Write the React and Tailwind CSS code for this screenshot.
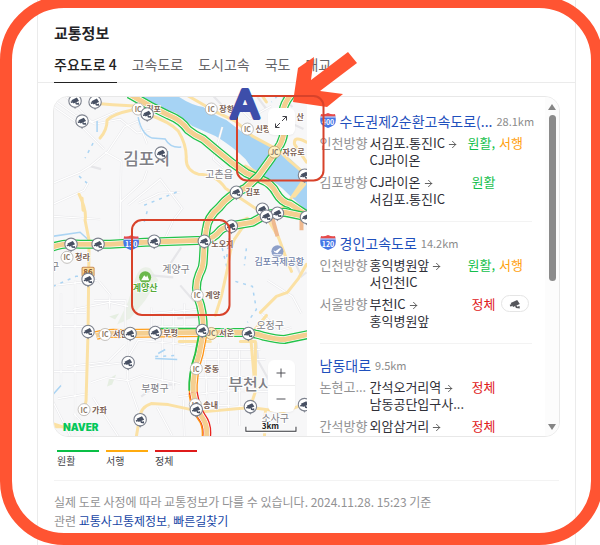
import React from "react";
import { ArrowRight, Plus, Minus } from "lucide-react";

const tabs = ["주요도로 4", "고속도로", "도시고속", "국도", "대교"];

const roads = [
  {
    name: "수도권제2순환고속도로(...",
    km: "28.1km",
    shield: "400",
    rows: [
      { dir: "인천방향", from: "서김포.통진IC", to: "CJ라이온", status: ["원활", "서행"] },
      { dir: "김포방향", from: "CJ라이온", to: "서김포.통진IC", status: ["원활"] },
    ],
  },
  {
    name: "경인고속도로",
    km: "14.2km",
    shield: "120",
    rows: [
      { dir: "인천방향", from: "홍익병원앞", to: "서인천IC", status: ["원활", "서행"] },
      { dir: "서울방향", from: "부천IC", to: "홍익병원앞", status: ["정체"], cctv: true },
    ],
  },
  {
    name: "남동대로",
    km: "9.5km",
    rows: [
      { dir: "논현고...", from: "간석오거리역", to: "남동공단입구사...", status: ["정체"] },
      { dir: "간석방향", from: "외암삼거리", status: ["정체"] },
    ],
  },
];

const statusColor = {
  원활: "text-[#14bf4c]",
  서행: "text-[#ff9f0f]",
  정체: "text-[#e0201b]",
};

const legend = [
  { label: "원활", bar: "bg-[#0abf46]" },
  { label: "서행", bar: "bg-[#ffab0f]" },
  { label: "정체", bar: "bg-[#df1b1b]" },
];

function CameraShape({ fill = "#475063" }) {
  return (
    <g fill={fill}>
      <path d="M-3.6 -0.8 L1.8 -3.4 L4 0 L-1.6 2.4 Z" />
      <path d="M-4.4 0.6 L-2.6 0 L-2 1.6 L-4 2 Z" />
      <path d="M0 1.6 L1.4 1 L1.8 2.2 L3.8 1.6 L4 3.8 L0.8 3.4 Z" />
    </g>
  );
}

function Camera({ x, y }) {
  return (
    <g transform={`translate(${x} ${y})`}>
      <path d="M-2 5.5 L0 8 L2 5.5 Z" fill="#8b909a" />
      <circle r="6.2" fill="#fff" stroke="#7d828e" strokeWidth="1.1" />
      <CameraShape />
    </g>
  );
}

function Junction({ x, y, label, kind = "IC" }) {
  return (
    <g>
      <circle cx={x} cy={y} r="6" fill={kind === "JC" ? "#fff0c2" : "#fff"} stroke={kind === "JC" ? "#b99b66" : "#b5b1ad"} strokeWidth="0.8" />
      <text x={x} y={y + 3} textAnchor="middle" fontSize="7" fontWeight="700" fill="#8b7866">{kind}</text>
      <text x={x + 8} y={y + 3} fontSize="8" fontWeight="700" fill="#7a6053" stroke="#fff" strokeWidth="1.5" paintOrder="stroke">{label}</text>
    </g>
  );
}

function Shield({ x = 0, y = 0, label }) {
  return (
    <g transform={`translate(${x} ${y})`}>
      <path d="M1 2 Q4 3 8 1 Q12 3 15 2 Q17 9 14 12 Q11 14 8 15 Q5 14 2 12 Q-1 9 1 2 Z" fill="#4677e6" />
      <path d="M1 1 Q4 2 8 0 Q12 2 15 1 L15.5 3.5 H0.5 Z" fill="#e64a4a" />
      <path d="M0.5 4 H15.5" stroke="#fff" strokeWidth="0.8" />
      <text x="8" y="11.5" textAnchor="middle" fontSize="7" fontWeight="700" fill="#fff">{label}</text>
    </g>
  );
}

const trunkA = "M129 94 L150 106 L168 115 Q181 120 188 130 Q194 135 203 139 L216 150 L232 163 L246 173 L260 179 Q271 183 276 193 Q281 202 290 204 L308 216";
const trunkB = "M291 94 Q281 106 282 118 Q286 132 280 144 L271 158 L258 176 L245 188 Q228 195 219 207 Q207 217 206 229 L204 242 L203 260 Q203 267 199 274 Q194 286 198 298 Q203 310 203 330";
const trunkC = "M52 247 Q64 242 80 244 L110 244 L145 242 L204 240 Q213 239 220 230 Q224 226 234 225 L252 222 L266 214 L284 212 L308 217";
const east = "M203 332 L245 332 Q256 333 264 336 Q276 339 284 339 L308 334";
const west = "M96 335 Q106 332 120 333 L203 332";
const south = "M203 332 L199 353 Q192 374 193 394";
const southJam = "M193 392 Q196 409 202 417 Q208 425 206 438";

function Trunk({ d, edge = "#23c34a", mid = "#f4cf91" }) {
  return (
    <g fill="none" strokeLinejoin="round">
      <path d={d} stroke={edge} strokeWidth="9" />
      <path d={d} stroke="#fff" strokeWidth="6.4" />
      <path d={d} stroke={mid} strokeWidth="5" />
    </g>
  );
}

const cameras = [
  [75, 101], [95, 102], [82, 121], [147, 114], [161, 153], [304, 175], [236, 192],
  [262, 209], [277, 213], [266, 216], [231, 226], [204, 241], [154, 241], [98, 244],
  [71, 244], [88, 279], [88, 331], [130, 333], [155, 332], [128, 362], [140, 419],
  [202, 330], [248, 333], [196, 409], [250, 406], [304, 404], [306, 217],
];

function TrafficMap() {
  return (
    <svg viewBox="54 97 252 339" preserveAspectRatio="xMinYMin slice" className="block h-full w-full" role="img" aria-label="교통지도">
      <rect x="53" y="96" width="255" height="343" fill="#f7f7f8" />
      <g fill="#e5eee1">
        <path d="M134 282 Q139 263 150 268 L158 280 Q151 290 145 300 L130 318 L117 324 L128 301 Z" opacity=".75" />
        <path d="M109 378 L116 374 L112 384 L107 386 Z" />
        <path d="M109 316 L119 313 L115 319 Z" />
      </g>
      <path d="M140 95 H176 Q190 105 203 107 Q213 115 226 120 L243 133 Q262 139 271 147 L290 159 L308 176 V212 L290 196 Q276 181 264 177 Q252 171 245 159 Q232 146 215 136 L192 126 L176 113 Q157 107 140 96 Z" fill="#a6d3f4" />

      <g fill="none" stroke="#e6e6e9" strokeWidth="2.2">
        <path d="M53 106 L80 125 L104 149 M54 100 L75 115 L95 124 L120 119 L137 133 L150 130 M65 96 L92 122 L117 111 M53 183 L80 172 L90 166 L108 151 L124 127 L138 121 L147 144" />
        <path d="M105 152 L121 161 L120 240 M90 166 L101 169 M53 204 L84 190 L88 183 M120 202 L143 181 L147 170 M128 205 L160 179 L182 208 L173 220 L164 240 M53 216 L100 219 M138 203 L159 193 L180 192" />
        <path d="M54 285 L97 280 M73 309 L109 302 L128 306 M75 280 V434 M61 293 V384 M66 312 H86 M54 326 H86 M99 281 L110 294 L109 309 M94 300 H125 V331 M54 371 H86 M58 398 L88 393 M67 366 L108 361 L125 344" />
        <path d="M90 366 L125 362 L138 340 L174 343 L206 347 M91 382 L106 377 L128 380 L142 375 L180 383 M128 341 L127 379 L138 410 M141 396 L157 384 L175 384 M151 307 V327 M162 313 V381 M173 308 V389 M184 303 V344 M151 313 L198 309 M151 326 H198" />
        <path d="M205 349 H260 M195 359 H265 M191 377 H245 M204 343 L207 403 M218 343 V423 M228 350 V434 M239 350 V425 M178 396 L228 390 L268 391 M205 404 L245 406 M157 407 L172 435 M183 399 L184 436 M74 413 L93 434 M53 401 L71 437 M93 397 L119 437" />
        <path d="M222 127 L213 159 L223 168 M238 107 L250 119 L260 112 L271 106 M213 96 L227 111 M257 97 L266 109 M282 97 L292 107 M288 122 L303 129 M267 280 L292 296 L301 313 M292 257 L301 276 L306 272 M177 318 L206 316 M261 313 L280 330 L291 327 M256 342 L258 361 L268 379 M180 285 L194 301 M151 275 L173 277 M169 265 L181 247" />
      </g>
      <g fill="none" stroke="#fff" strokeWidth="1.2">
        <path d="M53 106 L80 125 L104 149 M54 100 L75 115 L95 124 L120 119 L137 133 L150 130 M65 96 L92 122 L117 111 M53 183 L80 172 L90 166 L108 151 L124 127 L138 121 L147 144 M105 152 L121 161 L120 240 M53 204 L84 190 L88 183 M120 202 L143 181 L147 170 M128 205 L160 179 L182 208 L173 220 L164 240 M53 216 L100 219 M138 203 L159 193 L180 192" />
        <path d="M54 285 L97 280 M73 309 L109 302 L128 306 M75 280 V434 M61 293 V384 M66 312 H86 M54 326 H86 M99 281 L110 294 L109 309 M94 300 H125 V331 M54 371 H86 M58 398 L88 393 M67 366 L108 361 L125 344 M90 366 L125 362 L138 340 L174 343 L206 347 M91 382 L106 377 L128 380 L142 375 L180 383 M128 341 L127 379 L138 410 M151 307 V327 M162 313 V381 M173 308 V389 M184 303 V344 M151 313 L198 309 M151 326 H198" />
        <path d="M205 349 H260 M195 359 H265 M191 377 H245 M204 343 L207 403 M218 343 V423 M228 350 V434 M239 350 V425 M178 396 L228 390 L268 391 M205 404 L245 406 M157 407 L172 435 M183 399 L184 436 M74 413 L93 434 M53 401 L71 437 M93 397 L119 437 M222 127 L213 159 L223 168 M238 107 L250 119 L260 112 L271 106 M267 280 L292 296 L301 313 M261 313 L280 330 L291 327" />
      </g>

      <g fill="none" stroke="#abd4f3" strokeWidth="1.5">
        <path d="M97 121 V132 M138 117 Q141 134 152 138 L165 139 Q170 148 181 147 M53 236 L80 232 L91 242 M53 394 L61 385 M158 353 L165 349 M155 358 L177 359" />
        <path strokeDasharray="3 5" d="M93 143 L85 158 M79 176 L87 183 M144 205 L159 199 L181 190 M147 211 L144 222 M53 286 L76 276 L98 274 M220 240 L227 269 M246 248 L244 265 M235 281 L252 286 L256 309 L247 322 M230 230 L226 260 M155 356 L176 355 M277 96 L271 102" />
      </g>

      <g fill="none" stroke="#fbe1a4" strokeWidth="3" strokeLinecap="round" strokeLinejoin="round">
        <path d="M91 103 Q112 105 135 106 L132 110 Q113 114 107 120 Q107 130 100 138 M147 114 Q170 122 178 131 Q186 144 186 157 Q185 170 198 174 Q216 174 225 188 L246 202 L265 215 L278 237" />
        <path d="M188 96 L214 111 L235 121 L252 136 L278 150 Q288 160 300 170 M306 142 Q293 135 294 144 L306 162 M303 180 L288 202 L280 209" />
        <path d="M79 194 Q87 211 85 220 L89 240 L88 331 L86 400 L84 410 M82 198 L83 210 M53 426 H70 M53 423 L65 427 M140 419 Q139 407 151 403 L168 404 L191 409 L205 411 L250 407 L283 411 L306 403 M139 419 L136 437" />
        <path d="M243 226 L234 239 Q230 247 227 269 L221 296 L215 315 M247 218 Q236 222 230 232 M278 237 L285 256 L291 271 M294 196 L304 184 M306 264 L298 278 L287 292 L276 296 L260 312 M266 315 L252 332 M240 341 H255 V391 L250 406 M250 333 L255 391 M265 411 L264 437" />
        <path d="M179 341 L210 341 M262 96 L266 102 M245 166 L256 172" />
      </g>
      <path d="M272 218 L277 236 M301 218 V230" fill="none" stroke="#efb98f" strokeWidth="4" />

      <Trunk d={west} edge="#ffa01f" />
      <path d="M160 328 H203" fill="none" stroke="#23c34a" strokeWidth="1.4" />
      <Trunk d={south} edge="#ff9415" />
      <path d="M199 333 L195 353 Q188 374 189 390" fill="none" stroke="#23c34a" strokeWidth="1.8" />
      <Trunk d={southJam} edge="#e9231f" />
      <path d="M189 394 Q191 409 198 419 Q203 425 202 437" fill="none" stroke="#ff9415" strokeWidth="1.5" />
      <Trunk d={east} />
      <Trunk d={trunkA} />
      <Trunk d={trunkC} />
      <Trunk d={trunkB} />

      <g fill="#808086" stroke="#fff" strokeWidth="2" paintOrder="stroke">
        <text x="123" y="165" fontSize="17" fontWeight="500">김포시</text>
        <text x="205" y="178" fontSize="10">고촌읍</text>
        <text x="162" y="273" fontSize="10">계양구</text>
        <text x="50" y="270" fontSize="10">구</text>
        <text x="141" y="391" fontSize="10">부평구</text>
        <text x="256" y="329" fontSize="10">오정구</text>
        <text x="228" y="389" fontSize="16" fontWeight="500">부천시</text>
        <text x="261" y="421" fontSize="10">소사구</text>
      </g>

      <Junction x={138} y={109} label="김포" />
      <Junction x={211} y={109} label="장항" />
      <Junction x={247} y={129} label="신평" />
      <Junction x={274} y={152} label="자유로" kind="JC" />
      <Junction x={67} y={257} label="청라" />
      <Junction x={197} y={295} label="계양" />
      <Junction x={105} y={334} label="서인천" />
      <Junction x={211} y={333} label="서운" kind="JC" />
      <Junction x={196} y={368} label="중동" />
      <Junction x={195} y={404} label="송내" />
      <Junction x={84} y={409} label="가좌" />
      <g fontSize="8" fontWeight="700" fill="#7a6053" stroke="#fff" strokeWidth="1.5" paintOrder="stroke">
        <text x="245" y="195">김포</text>
        <text x="211" y="247">노오지</text>
        <text x="163" y="336">부평</text>
        <text x="296" y="120">산</text>
      </g>
      <rect x="82" y="267" width="12" height="9" rx="1" fill="#ffdf9a" stroke="#c88b54" />
      <text x="88" y="275" textAnchor="middle" fontSize="8" fontWeight="700" fill="#835435">86</text>
      <Shield x={123} y={235} label="130" />

      <circle cx="145" cy="277" r="6" fill="#6bb84c" />
      <path d="M141 280 L144 275 L146 277 L147 275 L149 280 Z" fill="#fff" />
      <text x="145" y="291" textAnchor="middle" fontSize="9" fontWeight="700" fill="#57aa3a" stroke="#fff" strokeWidth="1.5" paintOrder="stroke">계양산</text>
      <circle cx="277" cy="251" r="6" fill="#8d9fc8" />
      <path d="M273 250 L275 251 L279 248 L281 248 L277 253 L274 252 Z M273 254 H281 V255 H273 Z" fill="#fff" />
      <text x="254" y="265" fontSize="9" fontWeight="500" fill="#6f7fa9" stroke="#fff" strokeWidth="1.5" paintOrder="stroke">김포국제공항</text>

      {cameras.map(([x, y]) => <Camera key={`${x}-${y}`} x={x} y={y} />)}

      <text x="63" y="430" fontSize="10" fontWeight="900" fill="#03c75a" fontFamily="Inter, sans-serif">NAVER</text>
      <path d="M246 426 V431 H295 V426" fill="none" stroke="#fff" strokeWidth="3" />
      <path d="M245.500 426 V430.500 H295.500 V426" fill="none" stroke="#33343a" />
      <text x="270" y="428" textAnchor="middle" fontSize="8" fontWeight="600" fill="#222" stroke="#fff" strokeWidth="1.5" paintOrder="stroke">3km</text>
    </svg>
  );
}

function Road({ road }) {
  return (
    <li className="border-b border-[#f3f3f3] pt-[10px] pb-[14px]">
      <h3 className="flex h-[22px] items-center whitespace-nowrap">
        {road.shield && (
          <svg viewBox="0 0 16 16" className="mr-1 h-4 w-4 shrink-0" aria-hidden="true">
            <Shield label={road.shield} />
          </svg>
        )}
        <a href="#road" className="text-sm leading-[22px] text-[#1f50bd]">{road.name}</a>
        <span className="ml-1 text-[11px] text-[#8b8b8b]">{road.km}</span>
      </h3>
      <div className="mt-[2px] flex flex-col gap-[5px]">
        {road.rows.map((row) => (
          <div key={row.dir} className="grid grid-cols-[50px_98px_1fr] text-[13px] leading-[17px] whitespace-nowrap">
            <span className="text-[#929294]">{row.dir}</span>
            <span className="text-[#303038]">
              {row.from}
              <ArrowRight className="ml-[2px] inline h-[11px] w-[11px] text-[#555]" strokeWidth={2} aria-label="에서" />
              {row.to && <span className="block">{row.to}</span>}
            </span>
            <span className={row.status.length === 1 ? "flex items-start pl-1" : "flex items-start"}>
              {row.status.map((s, i) => (
                <React.Fragment key={s}>
                  {i > 0 && <span className="mr-1 text-[#14bf4c]">,</span>}
                  <span className={statusColor[s]}>{s}</span>
                </React.Fragment>
              ))}
              {row.cctv && (
                <button type="button" aria-label="CCTV 보기" className="ml-[6px] flex h-[17px] w-7 items-center justify-center rounded-full border border-[#e5e5e5] bg-white">
                  <svg viewBox="-5 -5 10 10" className="h-3 w-3"><CameraShape fill="#55565b" /></svg>
                </button>
              )}
            </span>
          </div>
        ))}
      </div>
    </li>
  );
}

export default function App() {
  return (
    <div className="relative min-h-screen overflow-hidden bg-white font-['Noto_Sans_CJK_KR','Noto_Sans',sans-serif]">
      <main className="mr-6 ml-[37px] min-h-screen border-x border-[#ebebeb] pt-[22px]">
        <h1 className="px-4 text-[15px] leading-[22px] font-bold text-[#242428]">교통정보</h1>
        <nav className="mt-[10px] flex gap-[15px] border-b border-[#ebebeb] px-4">
          {tabs.map((t, i) => (
            <button
              key={t}
              type="button"
              className={
                i === 0
                  ? "-mb-px border-b border-[#222] pb-2 text-sm leading-5 font-medium whitespace-nowrap text-[#222]"
                  : "pb-2 text-sm leading-5 whitespace-nowrap text-[#66666a]"
              }
            >
              {t}
            </button>
          ))}
        </nav>

        <div className="mt-[13px] px-[15px]">
          <section className="flex h-[341px] overflow-hidden rounded-[15px] border border-[#e8e8e8]">
            <div className="relative w-1/2 shrink-0 overflow-hidden">
              <TrafficMap />
              <button type="button" aria-label="지도 확대보기" className="absolute top-[11px] right-3 flex h-[27px] w-[27px] items-center justify-center rounded-md bg-white text-[#44444a] shadow-xs">
                <svg viewBox="0 0 14 14" className="h-[14px] w-[14px]" fill="none" stroke="currentColor" strokeWidth="1">
                  <path d="M8.500 1.500 H12.500 V5.500 M12.500 1.500 L8 6 M1.500 8.500 V12.500 H5.500 M1.500 12.500 L6 8" />
                </svg>
              </button>
              <div className="absolute right-3 bottom-6 flex w-[27px] flex-col rounded-md bg-white text-[#44444a] shadow-xs">
                <button type="button" aria-label="확대" className="flex h-[26px] items-center justify-center border-b border-[#ededed]">
                  <Plus size={14} strokeWidth={1.6} />
                </button>
                <button type="button" aria-label="축소" className="flex h-[26px] items-center justify-center">
                  <Minus size={14} strokeWidth={1.6} />
                </button>
              </div>
            </div>
            <ul className="min-w-0 flex-1 overflow-hidden pt-[3px] pr-[13px] pl-[13px]">
              {roads.map((r) => <Road key={r.name} road={r} />)}
            </ul>
            <div className="flex w-[14px] shrink-0 flex-col items-center bg-[#fcfcfc] pt-[7px] pb-[6px]" aria-hidden="true">
              <svg viewBox="0 0 8 6" className="h-[6px] w-2"><path d="M4 0 L8 6 H0 Z" fill="#858585" /></svg>
              <div className="mt-[5px] h-[166px] w-[7px] rounded-full bg-[#8b8b8b]" />
              <svg viewBox="0 0 8 6" className="mt-auto h-[6px] w-2"><path d="M4 6 L8 0 H0 Z" fill="#858585" /></svg>
            </div>
          </section>
        </div>

        <ul className="mt-[13px] flex gap-[7px] px-[19px]">
          {legend.map((l) => (
            <li key={l.label} className="w-[42px] text-[10px] leading-[18px] text-[#44444a]">
              <div className={`h-[2px] ${l.bar}`} />
              {l.label}
            </li>
          ))}
        </ul>

        <footer className="mx-4 mt-[10px] border-t border-[#f3f3f3] pt-[11px] text-xs leading-[19px] text-[#929294]">
          <p>실제 도로 사정에 따라 교통정보가 다를 수 있습니다. 2024.11.28. 15:23 기준</p>
          <p>
            관련 <a href="#control" className="text-[#1746a5]">교통사고통제정보</a>, <a href="#route" className="text-[#1746a5]">빠른길찾기</a>
          </p>
        </footer>
      </main>

      <svg viewBox="0 0 600 545" className="pointer-events-none absolute top-0 left-0 w-full" aria-hidden="true">
        <rect x="132" y="220" width="97.500" height="95" rx="10" fill="none" stroke="#d8422a" strokeWidth="2" />
        <path d="M348 52 L357 63 L320 91 L343 94 L327 107 L293 102 L298 68 L314 57 L311 80 Z" fill="#ff5432" />
        <rect x="237" y="96" width="86.500" height="84.500" rx="10" fill="none" stroke="#d8422a" strokeWidth="2" />
        <text x="245" y="118" textAnchor="middle" fontFamily="Liberation Sans, sans-serif" fontSize="41" fill="#3d4eaa" stroke="#3d4eaa" strokeWidth="4" strokeLinejoin="round">A</text>
      </svg>
      <div className="pointer-events-none absolute -top-1 -right-[3px] bottom-0 left-0 rounded-[64px] border-12 border-[#ff5432]" />
    </div>
  );
}
